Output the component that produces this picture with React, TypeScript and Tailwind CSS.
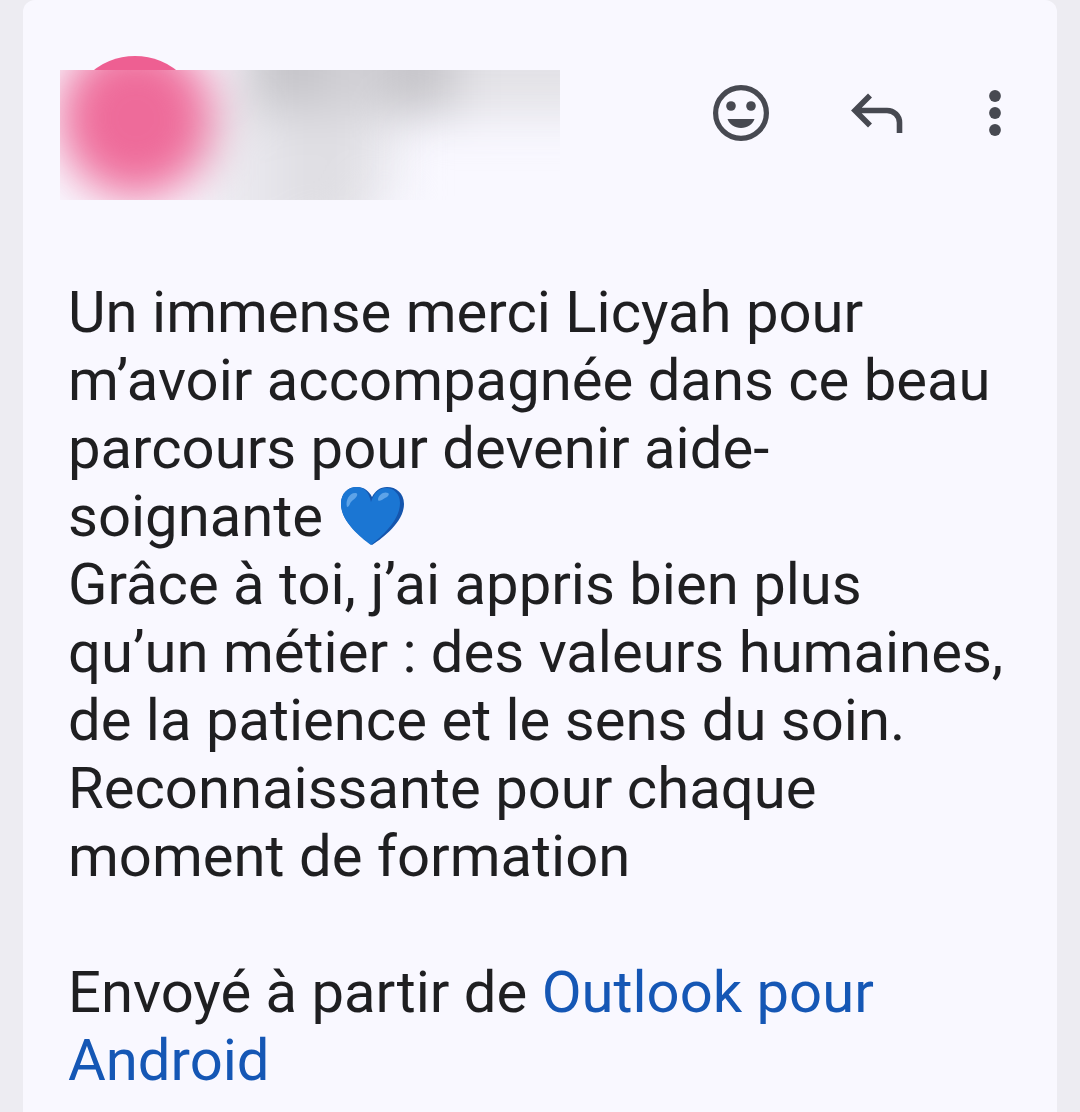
import type { ReactNode } from "react";

function HiddenSender() {
  return (
    <svg viewBox="0 0 500 144" className="w-[500px] min-w-0 shrink" role="img" aria-label="Expéditeur masqué">
      <defs>
        <clipPath id="mask-area">
          <rect x="0" y="14" width="500" height="130" />
        </clipPath>
        <clipPath id="avatar-top">
          <rect x="0" y="0" width="500" height="14" />
        </clipPath>
        <filter id="soft" filterUnits="userSpaceOnUse" x="-100" y="-100" width="700" height="340" colorInterpolationFilters="sRGB">
          <feGaussianBlur stdDeviation="23" />
        </filter>
      </defs>
      <circle cx="75" cy="67" r="67" fill="#ee5f92" clipPath="url(#avatar-top)" />
      <g clipPath="url(#mask-area)">
        <rect x="0" y="14" width="500" height="130" fill="#f9f8ff" />
        <g filter="url(#soft)">
          <ellipse cx="76" cy="62" rx="77" ry="79" fill="#ee6b9a" />
          <rect x="178" y="-50" width="222" height="110" fill="#d2d1d6" />
          <rect x="205" y="-30" width="60" height="70" fill="#c4c3c8" />
          <rect x="325" y="-30" width="60" height="90" fill="#c6c5ca" />
          <rect x="400" y="-50" width="190" height="110" fill="#e3e2e7" />
          <rect x="150" y="60" width="100" height="140" fill="#e9e8ee" />
          <rect x="220" y="60" width="90" height="120" fill="#dfdee3" />
          <rect x="300" y="60" width="40" height="80" fill="#e9e8ee" />
        </g>
      </g>
    </svg>
  );
}

function IconButton({ label, className, children }: { label: string; className: string; children: ReactNode }) {
  return (
    <button type="button" aria-label={label} className={`flex h-[58px] shrink-0 items-center justify-center ${className}`}>
      {children}
    </button>
  );
}

function BlueHeart() {
  return (
    <svg viewBox="-3 0 70 60" className="inline-block h-[60px] w-[70px] align-[-10px]" role="img" aria-label="cœur bleu">
      <path d="M32 59C25 54 1 37 1 18C1 7 8 1 17 1c7 0 12 4 15 10C35 5 40 1 47 1c9 0 17 6 17 17c0 19-24 36-32 41z" fill="#1555ad" />
      <path d="M31 59C24 54 1 37 1 18C1 7 8 1 17 1c7 0 12 5 14 15C34 7 39 2 46 2c8 0 14 6 14 15c0 19-22 36-29 42z" fill="#1b76d3" />
      <path d="M7 21C5 14 10 6 16 7c3 1 0 5-3 7c-4 3-3 7-6 7z" fill="#5da3e8" />
      <path d="M38 14c0-5 6-9 10-7c2 1 0 4-3 5c-3 2-6 4-7 2z" fill="#5da3e8" />
    </svg>
  );
}

export default function App() {
  return (
    <div className="min-h-screen bg-[#edecf2] px-[23px] font-['Roboto',sans-serif]">
      <main className="min-h-screen rounded-t-xl bg-[#f9f8ff] pb-4 text-[#1f1f21]">
        <header className="flex items-start justify-between pt-14 pr-[52px] pl-[37px]">
          <HiddenSender />
          <div className="mt-7 flex shrink-0 gap-20 text-[#474951]">
            <IconButton label="Ajouter une réaction" className="w-14">
              <svg viewBox="0 0 56 56" className="size-14" fill="currentColor">
                <circle cx="28" cy="28" r="25.4" fill="none" stroke="currentColor" strokeWidth="5.2" />
                <circle cx="18" cy="21" r="4.8" />
                <circle cx="38" cy="21" r="4.8" />
                <path d="M14.5 34h27c-2 5.5-7 9-13.5 9s-11.5-3.5-13.5-9z" />
              </svg>
            </IconButton>
            <IconButton label="Répondre" className="w-14">
              <svg viewBox="0 0 56 56" className="size-14" fill="none" stroke="currentColor" strokeWidth="5.6">
                <path d="M21 10.5L6 25.5l15 15M7 25.5h31c7 0 12.500 5.500 12.500 12v10.500" />
              </svg>
            </IconButton>
            <IconButton label="Plus d'options" className="w-5">
              <svg viewBox="0 0 20 56" className="h-14 w-5" fill="currentColor">
                <circle cx="10" cy="11" r="5.9" />
                <circle cx="10" cy="28" r="5.9" />
                <circle cx="10" cy="45" r="5.9" />
              </svg>
            </IconButton>
          </div>
        </header>

        <article className="px-[45px] pt-[78px] text-[58px] leading-[68px]">
          <p>
            Un immense merci Licyah pour m’avoir accompagnée dans ce beau parcours pour devenir aide-soignante <BlueHeart />
          </p>
          <p>Grâce à toi, j’ai appris bien plus qu’un métier : des valeurs humaines, de la patience et le sens du soin.</p>
          <p>Reconnaissante pour chaque moment de formation</p>
          <p className="pt-[68px]">
            Envoyé à partir de{" "}
            <a href="#outlook" className="text-[#1557b5]">
              Outlook pour Android
            </a>
          </p>
        </article>
      </main>
    </div>
  );
}
